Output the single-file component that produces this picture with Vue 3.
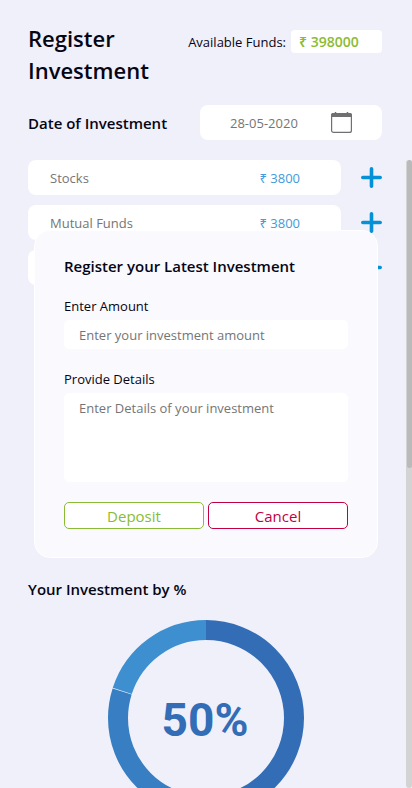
<script setup>
import { ref } from 'vue'

const funds = ref(398000)
const date = ref('28-05-2020')
const amount = ref('')
const details = ref('')
const open = ref(true)

const investments = [
  { name: 'Stocks', value: '₹ 3800' },
  { name: 'Mutual Funds', value: '₹ 3800' },
  { name: '', value: '' },
]

// Shares of the ring, in percent, clockwise from the top.
const segments = [
  { share: 50, start: 0, color: '#326db6' },
  { share: 29.9, start: 50, color: '#387ec2' },
  { share: 20, start: 80, color: '#3d8fd0' },
]
</script>

<template>
  <div class="page">
    <main class="content">
      <header class="top">
        <h1>Register Investment</h1>
        <div class="funds">
          <span>Available Funds:</span>
          <strong>₹ {{ funds }}</strong>
        </div>
      </header>

      <div class="date-row">
        <label for="date">Date of Investment</label>
        <div class="date-box">
          <input id="date" v-model="date" type="text" />
          <svg width="21" height="21" viewBox="0 0 21 21" aria-hidden="true">
            <rect x="0.6" y="1.6" width="19.8" height="18.8" rx="2" fill="none" stroke="#707070" stroke-width="1.2" />
            <path d="M0 5V3Q0 1 2 1H19Q21 1 21 3V5Z" fill="#707070" />
            <path d="M4.5 0V2M16.5 0V2" stroke="#707070" stroke-width="1.5" />
          </svg>
        </div>
      </div>

      <ul class="list">
        <li v-for="(item, i) in investments" :key="i">
          <div class="item">
            <span>{{ item.name }}</span>
            <span class="value">{{ item.value }}</span>
          </div>
          <button class="add" type="button" aria-label="Add" @click="open = true">
            <svg width="21" height="21" viewBox="0 0 21 21">
              <path d="M10.5 1.8V19.2M1.8 10.5H19.2" stroke="#0491d8" stroke-width="3.6" stroke-linecap="round" />
            </svg>
          </button>
        </li>
      </ul>

      <section class="chart">
        <h2>Your Investment by %</h2>
        <svg class="ring" viewBox="0 0 198 198" role="img" aria-label="Investment share">
          <g fill="none" stroke-width="20" transform="rotate(-90 99 99)">
            <circle
              v-for="s in segments"
              :key="s.start"
              cx="99"
              cy="99"
              r="88"
              pathLength="100"
              :stroke="s.color"
              :stroke-dasharray="`${s.share} ${100 - s.share}`"
              :stroke-dashoffset="-s.start"
            />
          </g>
          <text x="98" y="117" text-anchor="middle">50%</text>
        </svg>
      </section>
    </main>

    <form v-if="open" class="modal" @submit.prevent="open = false">
      <h2>Register your Latest Investment</h2>
      <label for="amount">Enter Amount</label>
      <input id="amount" v-model="amount" type="text" placeholder="Enter your investment amount" />
      <label for="details">Provide Details</label>
      <textarea id="details" v-model="details" placeholder="Enter Details of your investment"></textarea>
      <div class="actions">
        <button class="deposit" type="submit">Deposit</button>
        <button class="cancel" type="button" @click="open = false">Cancel</button>
      </div>
    </form>

    <div class="track"><div class="thumb"></div></div>
  </div>
</template>

<style>
body {
  background: #f0f0fa;
}
</style>

<style scoped>
.page {
  position: relative;
  height: 100vh;
  overflow: hidden;
  box-sizing: border-box;
  background: #f0f0fa;
  color: #050514;
  font: 13px/20px "Open Sans", "Noto Sans", sans-serif;
}
.page * {
  box-sizing: border-box;
}
h1,
h2 {
  margin: 0;
  font-weight: 600;
}
h2 {
  font-size: 15px;
  line-height: 24px;
}
input,
textarea,
button {
  font: inherit;
  border: 0;
  outline: 0;
}
.content {
  padding: 22px 30px 0 28px;
}
.top {
  display: flex;
  align-items: flex-start;
  justify-content: space-between;
}
h1 {
  width: 130px;
  font-size: 22px;
  line-height: 32px;
}
.funds {
  display: flex;
  align-items: center;
  gap: 5px;
  padding-top: 8px;
  white-space: nowrap;
}
.funds strong {
  width: 91px;
  padding: 0 8px;
  border-radius: 4px;
  background: #fff;
  color: #8abb34;
  font-size: 14px;
  font-weight: 600;
  line-height: 23px;
}
.date-row {
  display: flex;
  align-items: center;
  justify-content: space-between;
  margin-top: 19px;
}
.date-row label {
  font-size: 15px;
  font-weight: 600;
}
.date-box {
  display: flex;
  align-items: center;
  gap: 11px;
  width: 182px;
  height: 35px;
  padding: 0 30px;
  border-radius: 8px;
  background: #fff;
}
.date-box input {
  width: 90px;
  padding: 0;
  background: transparent;
  color: #757575;
}
.date-box svg {
  flex: none;
}
.list {
  display: flex;
  flex-direction: column;
  gap: 10px;
  min-height: 398px;
  margin: 20px 0 19px;
  padding: 0;
  list-style: none;
}
.list li {
  display: flex;
  align-items: center;
  gap: 20px;
}
.item {
  display: flex;
  flex: 1;
  align-items: center;
  justify-content: space-between;
  height: 35px;
  padding: 0 41px 0 22px;
  border-radius: 8px;
  background: #fff;
  color: #757575;
}
.value {
  color: #429bdb;
}
.add {
  display: flex;
  padding: 0;
  background: none;
}
.ring {
  display: block;
  width: 198px;
  margin: 18px auto 0;
}
.chart {
  margin-right: -2px;
}
.ring text {
  fill: #326db6;
  font: 700 46px Roboto, sans-serif;
}
.modal {
  position: absolute;
  top: 230px;
  left: 34px;
  right: 34px;
  display: flex;
  flex-direction: column;
  padding: 23px 29px 28px;
  border: 1px solid #fff;
  border-radius: 16px;
  background: #f9f9fe;
}
.modal h2 {
  margin-bottom: 18px;
}
.modal label {
  margin-bottom: 4px;
}
.modal input,
.modal textarea {
  width: 100%;
  padding: 5px 15px;
  border-radius: 5px;
  background: #fff;
  color: #757575;
  resize: none;
}
.modal input {
  height: 29px;
  margin-bottom: 20px;
}
.modal textarea {
  height: 89px;
}
::placeholder {
  color: #757575;
}
.actions {
  display: flex;
  gap: 4px;
  margin-top: 20px;
}
.actions button {
  flex: 1;
  height: 27px;
  padding: 0;
  border: 1px solid;
  border-radius: 5px;
  background: #fff;
  font-size: 15px;
}
.actions .deposit {
  color: #8abb34;
}
.actions .cancel {
  color: #c2003f;
}
.track {
  position: absolute;
  top: 160px;
  right: 0;
  bottom: 0;
  width: 6px;
  border-radius: 3px;
  background: #d3d3d3;
}
.thumb {
  width: 5px;
  height: 49%;
  margin-left: 1px;
  border-radius: 3px;
  background: #bababa;
}
</style>
